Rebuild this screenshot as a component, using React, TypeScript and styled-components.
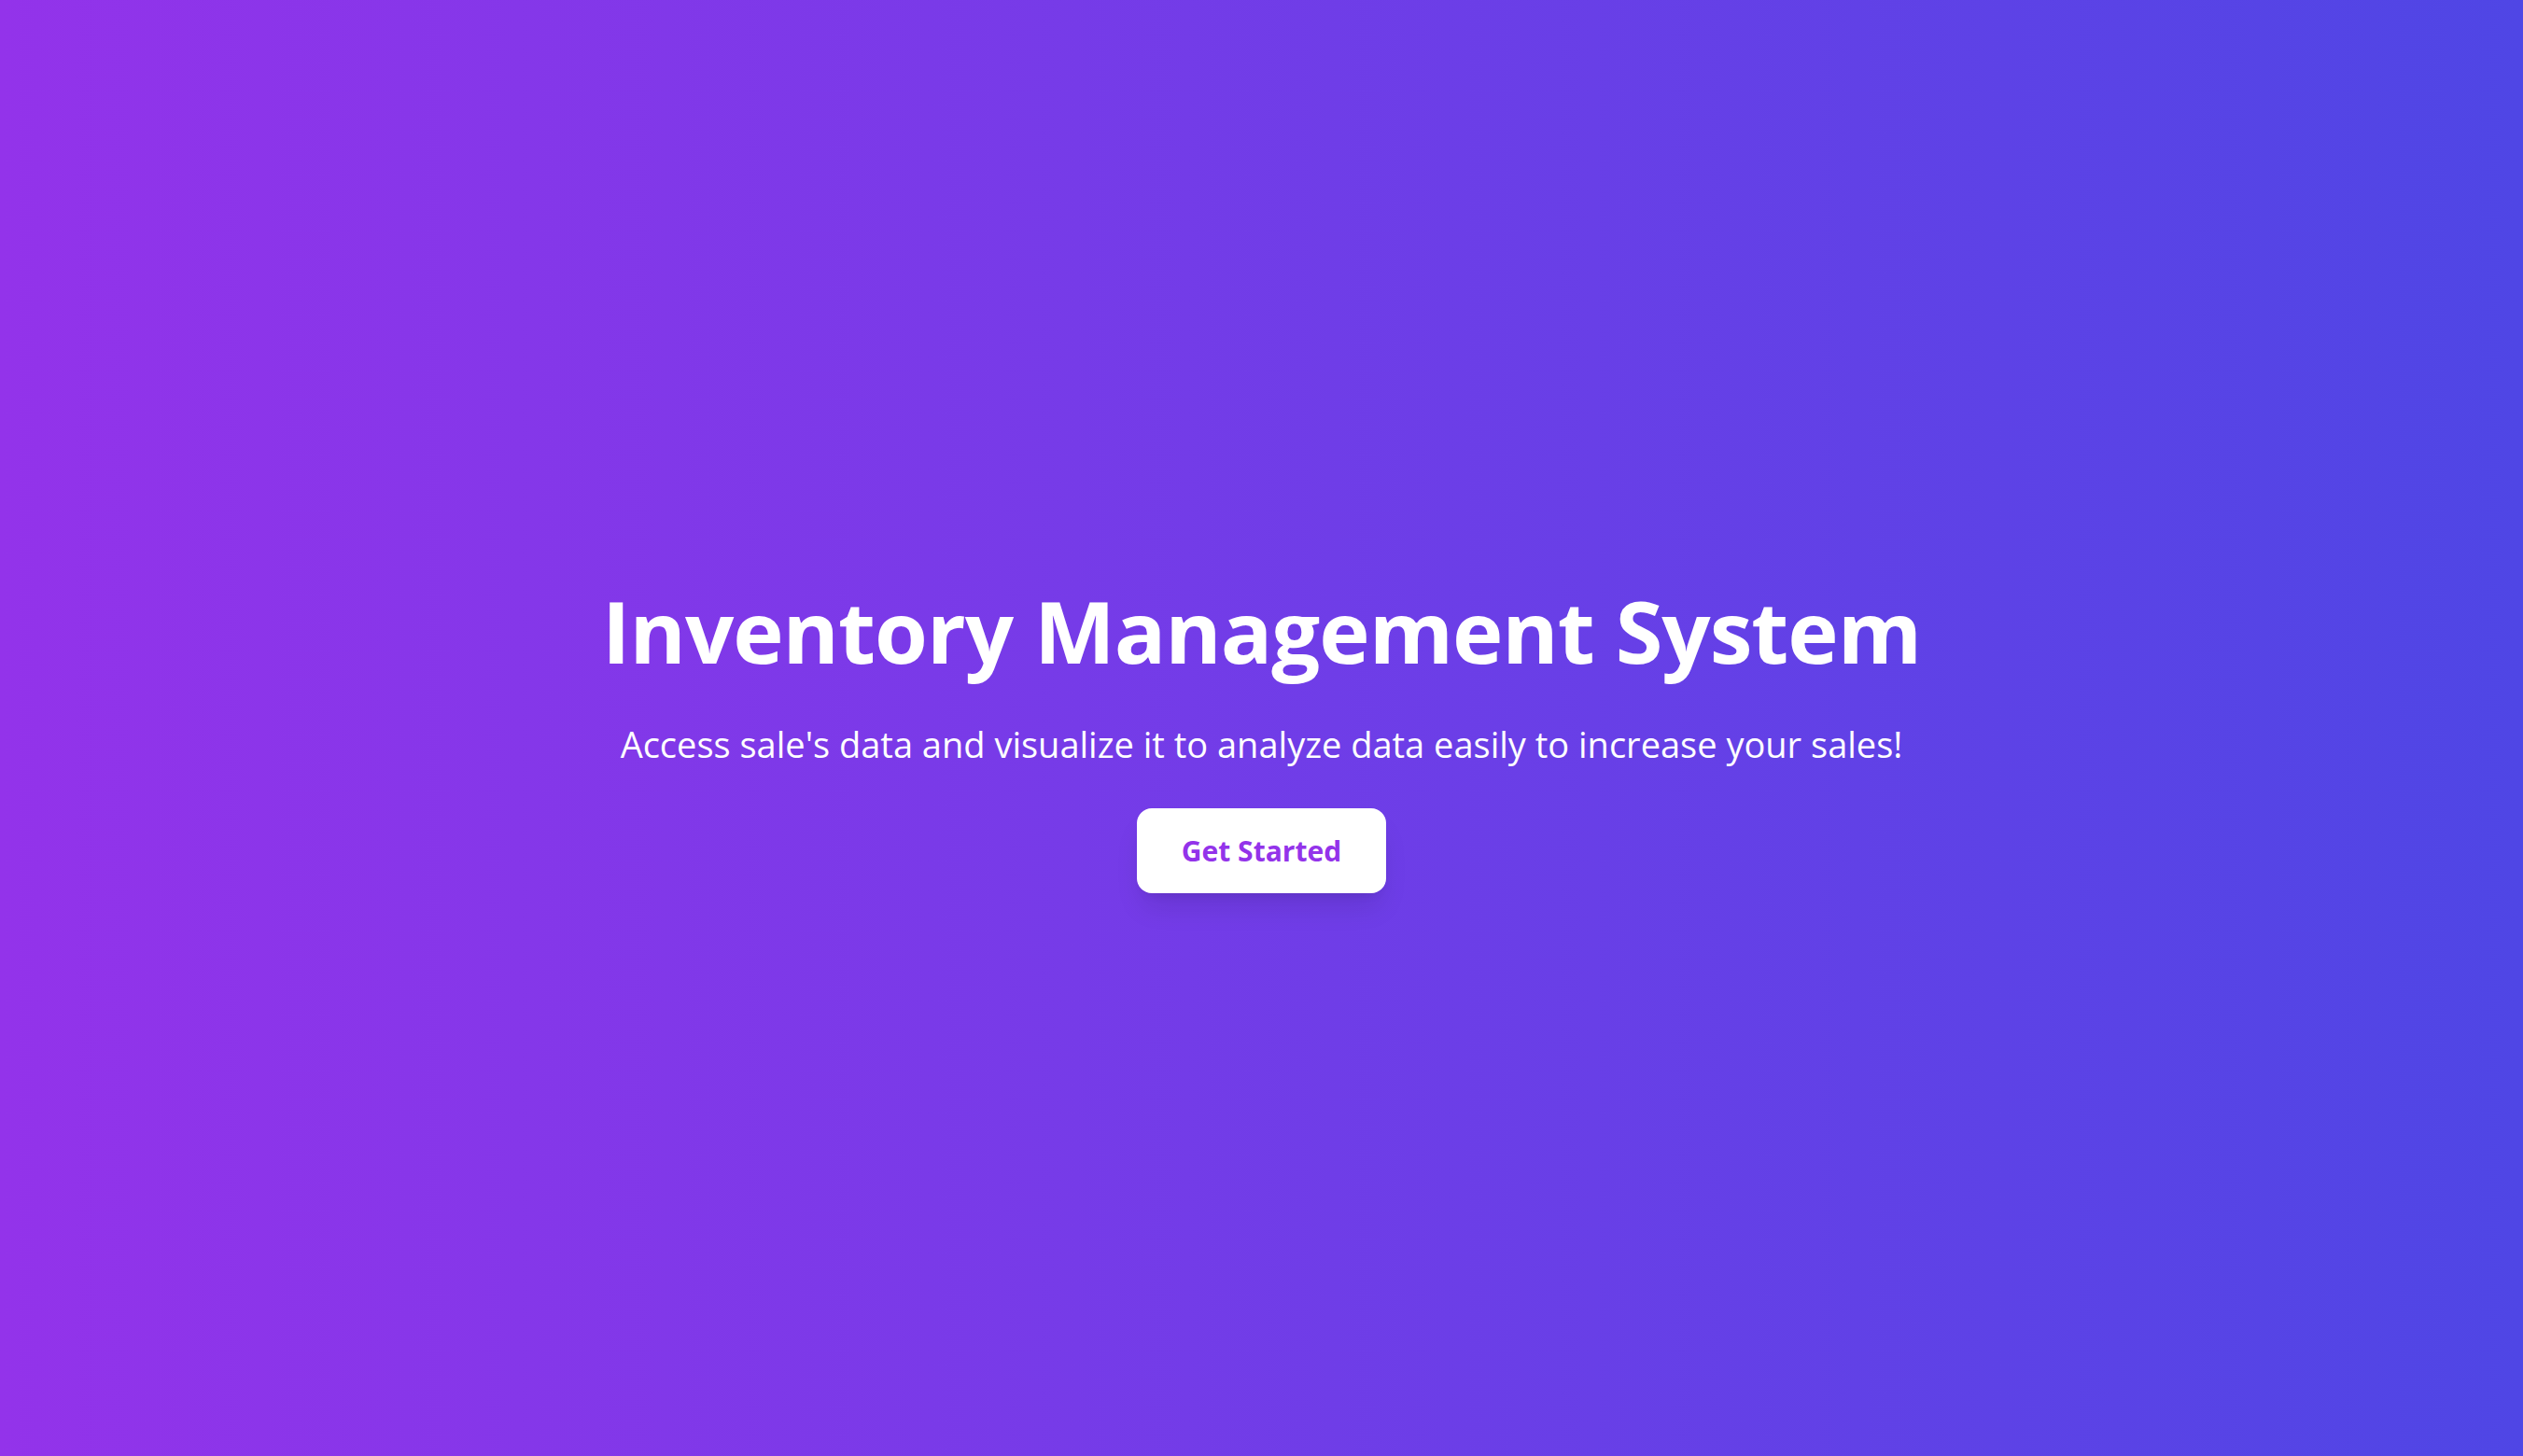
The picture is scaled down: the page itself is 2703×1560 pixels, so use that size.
import React from "react";
import styled, { createGlobalStyle } from "styled-components";

const GlobalStyle = createGlobalStyle`
    html, body {
        margin: 0;
        padding: 0;
    }
    body {
        font-family: "Open Sans", "Noto Sans", sans-serif;
    }
`;

const Hero = styled.section`
    box-sizing: border-box;
    min-height: 100vh;
    padding-top: 27px;
    display: flex;
    align-items: center;
    justify-content: center;
    background: linear-gradient(to right, #9333ea, #4f46e5);
    color: #ffffff;
`;

const Content = styled.div`
    display: flex;
    flex-direction: column;
    align-items: center;
    text-align: center;
`;

const Title = styled.h1`
    margin: 0 0 49px;
    font-size: 92px;
    line-height: 92px;
    letter-spacing: -1px;
    font-weight: 700;
`;

const Subtitle = styled.p`
    margin: 0 0 43px;
    font-size: 38px;
    line-height: 52px;
    font-weight: 400;
`;

const StartButton = styled.button`
    border: none;
    cursor: pointer;
    background: #ffffff;
    color: #9333ea;
    font-family: inherit;
    font-size: 30px;
    line-height: 43px;
    font-weight: 700;
    padding: 24px 48px;
    border-radius: 16px;
    box-shadow: 0 20px 30px -6px rgba(0, 0, 0, 0.1), 0 8px 12px -8px rgba(0, 0, 0, 0.1);
`;

export default function App() {
    return (
        <>
            <GlobalStyle />
            <Hero>
                <Content>
                    <Title>Inventory Management System</Title>
                    <Subtitle>
                        Access sale's data and visualize it to analyze data easily to increase your sales!
                    </Subtitle>
                    <StartButton>Get Started</StartButton>
                </Content>
            </Hero>
        </>
    );
}
